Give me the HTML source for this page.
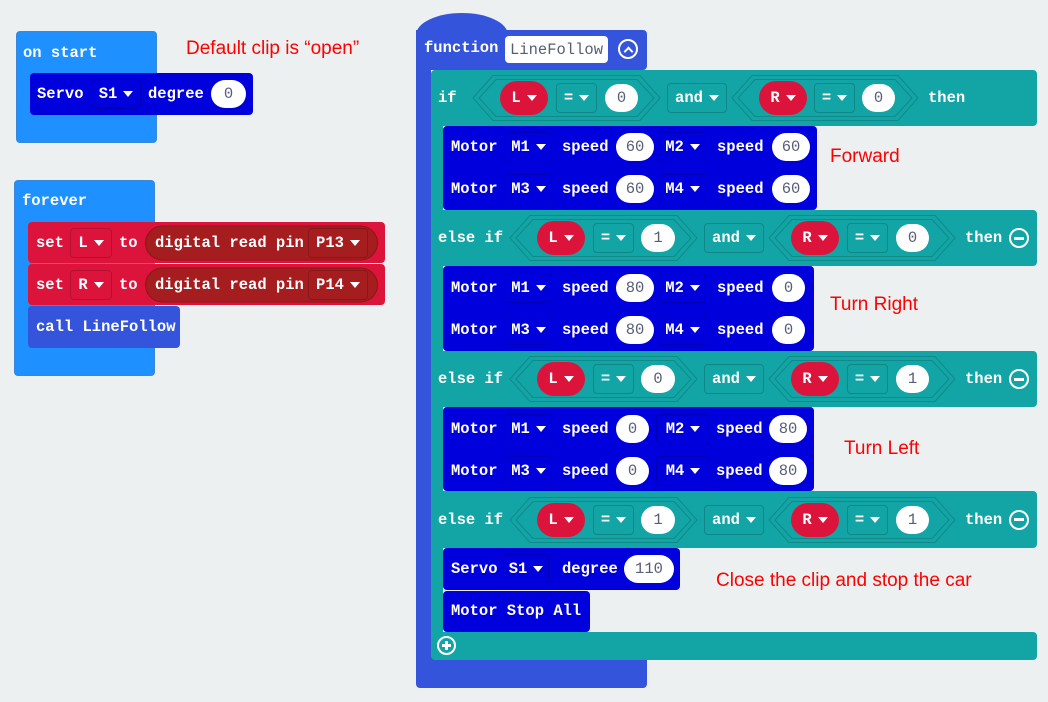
<!DOCTYPE html>
<html><head><meta charset="utf-8"><style>
*{box-sizing:border-box;margin:0;padding:0}
body{width:1048px;height:702px;background:#ecf0f1;position:relative;overflow:hidden;font-family:"Liberation Mono",monospace;font-weight:bold;font-size:15.5px;color:#fff}
.b{position:absolute}
.r{position:absolute;left:0;width:1048px}
.r>*{position:absolute;top:50%;transform:translateY(-50%);white-space:nowrap}
.dd{height:30px;border:1px solid rgba(0,0,0,.18);border-radius:4px;display:flex;align-items:center;justify-content:center;gap:6px}
.pill{height:28px;background:#fff;border-radius:14px;color:#575e75;display:flex;align-items:center;justify-content:center;font-weight:normal}
.oval{height:34px;background:#dc143c;border-radius:17px;display:flex;align-items:center;justify-content:center;gap:6px;width:48px}
.ar{display:inline-block;width:0;height:0;border-left:5px solid transparent;border-right:5px solid transparent;border-top:6px solid #fff}
.note{position:absolute;color:#f00;font-family:"Liberation Sans",sans-serif;font-weight:normal;font-size:19px}
.teal{background:#13a5a5}
.mb{background:#0000dd;border-radius:4px}
.circ{width:20px;height:20px;border:2px solid #fff;border-radius:50%;display:flex;align-items:center;justify-content:center}
.circ i{display:block;width:10px;height:3px;background:#fff}
</style></head><body>

<!-- on start -->
<div class="b" style="left:16px;top:31px;width:141px;height:112px;background:#1e90ff;border-radius:4px;border:1px solid #3a86d8"></div>
<div class="b" style="left:23px;top:44px">on start</div>
<div class="b mb" style="left:30px;top:73px;width:223px;height:42px"></div>
<div class="r" style="top:73px;height:42px">
 <span style="left:37px">Servo</span>
 <div class="dd" style="left:91px;width:50px">S1<span class="ar"></span></div>
 <span style="left:148px">degree</span>
 <div class="pill" style="left:211px;width:35px">0</div>
</div>
<div class="note" style="left:186px;top:38px">Default clip is “open”</div>

<!-- forever -->
<div class="b" style="left:14px;top:180px;width:141px;height:196px;background:#1e90ff;border-radius:4px;border:1px solid #3a86d8"></div>
<div class="b" style="left:22px;top:192px">forever</div>
<div class="b" style="left:28px;top:222px;width:357px;height:41px;background:#dc143c;border-radius:4px"></div>
<div class="b" style="left:28px;top:264px;width:357px;height:41px;background:#dc143c;border-radius:4px"></div>
<div class="r" style="top:222px;height:41px">
 <span style="left:36px">set</span>
 <div class="dd" style="left:70px;width:42px">L<span class="ar"></span></div>
 <span style="left:119px">to</span>
 <div style="left:145px;width:233px;height:35px;background:#a61d1f;border-radius:18px;border:1px solid #8d1515"></div>
 <span style="left:155px">digital read pin</span>
 <div class="dd" style="left:308px;width:60px">P13<span class="ar"></span></div>
</div>
<div class="r" style="top:264px;height:41px">
 <span style="left:36px">set</span>
 <div class="dd" style="left:70px;width:42px">R<span class="ar"></span></div>
 <span style="left:119px">to</span>
 <div style="left:145px;width:233px;height:35px;background:#a61d1f;border-radius:18px;border:1px solid #8d1515"></div>
 <span style="left:155px">digital read pin</span>
 <div class="dd" style="left:308px;width:60px">P14<span class="ar"></span></div>
</div>
<div class="b" style="left:28px;top:306px;width:152px;height:42px;background:#3455db;border-radius:4px"></div>
<div class="b" style="left:36px;top:318px">call LineFollow</div>

<!-- function -->
<div class="b" style="left:416px;top:13px;width:92px;height:30px;background:#3455db;border-radius:46px 46px 0 0 / 22px 22px 0 0"></div>
<div class="b" style="left:416px;top:30px;width:231px;height:40px;background:#3455db;border-radius:0 4px 4px 0"></div>
<div class="b" style="left:416px;top:60px;width:15px;height:610px;background:#3455db"></div>
<div class="b" style="left:416px;top:655px;width:231px;height:33px;background:#3455db;border-radius:0 0 4px 4px"></div>
<div class="b" style="left:424px;top:39px">function</div>
<div class="b" style="left:505px;top:36px;width:103px;height:27px;background:#fff;border-radius:4px;color:#575e75;font-weight:normal;display:flex;align-items:center;justify-content:center">LineFollow</div>
<div class="b circ" style="left:618px;top:39px"><span style="display:block;width:7px;height:7px;border-left:2px solid #fff;border-top:2px solid #fff;transform:translateY(2px) rotate(45deg)"></span></div>

<!-- teal if block -->
<div class="b teal" style="left:431px;top:70px;width:606px;height:56px;border-radius:4px"></div>
<div class="b teal" style="left:431px;top:120px;width:12px;height:520px"></div>
<div class="b teal" style="left:431px;top:210px;width:606px;height:56px;border-radius:0 4px 4px 0"></div>
<div class="b teal" style="left:431px;top:351px;width:606px;height:56px;border-radius:0 4px 4px 0"></div>
<div class="b teal" style="left:431px;top:491px;width:606px;height:57px;border-radius:0 4px 4px 0"></div>
<div class="b teal" style="left:431px;top:632px;width:606px;height:28px;border-radius:0 4px 4px 4px"></div>
<div class="b circ" style="left:437px;top:636px;width:19px;height:19px"><i style="width:9px"></i><i style="position:absolute;width:3px;height:9px"></i></div>

<!-- if row -->
<div class="r" style="top:70px;height:56px">
 <span style="left:438px">if</span>
 <svg style="left:472px" width="189" height="47"><polygon points="1,23.5 21,1 168,1 188,23.5 168,46 21,46" fill="none" stroke="#0e8a8a"/><polygon points="7,23.5 24,5 165,5 182,23.5 165,42 24,42" fill="none" stroke="#0e8a8a"/></svg>
 <div class="oval" style="left:500px">L<span class="ar"></span></div>
 <div class="dd" style="left:556px;width:41px">=<span class="ar"></span></div>
 <div class="pill" style="left:605px;width:33px">0</div>
 <div class="dd" style="left:667px;width:60px">and<span class="ar"></span></div>
 <svg style="left:731px" width="188" height="47"><polygon points="1,23.5 21,1 167,1 187,23.5 167,46 21,46" fill="none" stroke="#0e8a8a"/><polygon points="7,23.5 24,5 164,5 181,23.5 164,42 24,42" fill="none" stroke="#0e8a8a"/></svg>
 <div class="oval" style="left:759px">R<span class="ar"></span></div>
 <div class="dd" style="left:814px;width:41px">=<span class="ar"></span></div>
 <div class="pill" style="left:862px;width:33px">0</div>
 <span style="left:928px">then</span>
</div>

<!-- else if rows -->
<div class="r" style="top:210px;height:56px">
 <span style="left:438px">else if</span>
 <svg style="left:509px" width="189" height="47"><polygon points="1,23.5 21,1 168,1 188,23.5 168,46 21,46" fill="none" stroke="#0e8a8a"/><polygon points="7,23.5 24,5 165,5 182,23.5 165,42 24,42" fill="none" stroke="#0e8a8a"/></svg>
 <div class="oval" style="left:537px">L<span class="ar"></span></div>
 <div class="dd" style="left:593px;width:41px">=<span class="ar"></span></div>
 <div class="pill" style="left:641px;width:34px">1</div>
 <div class="dd" style="left:704px;width:60px">and<span class="ar"></span></div>
 <svg style="left:768px" width="188" height="47"><polygon points="1,23.5 21,1 167,1 187,23.5 167,46 21,46" fill="none" stroke="#0e8a8a"/><polygon points="7,23.5 24,5 164,5 181,23.5 164,42 24,42" fill="none" stroke="#0e8a8a"/></svg>
 <div class="oval" style="left:791px">R<span class="ar"></span></div>
 <div class="dd" style="left:847px;width:41px">=<span class="ar"></span></div>
 <div class="pill" style="left:896px;width:33px">0</div>
 <span style="left:965px">then</span>
 <div class="circ" style="left:1009px"><i></i></div>
</div>
<div class="r" style="top:351px;height:56px">
 <span style="left:438px">else if</span>
 <svg style="left:509px" width="189" height="47"><polygon points="1,23.5 21,1 168,1 188,23.5 168,46 21,46" fill="none" stroke="#0e8a8a"/><polygon points="7,23.5 24,5 165,5 182,23.5 165,42 24,42" fill="none" stroke="#0e8a8a"/></svg>
 <div class="oval" style="left:537px">L<span class="ar"></span></div>
 <div class="dd" style="left:593px;width:41px">=<span class="ar"></span></div>
 <div class="pill" style="left:641px;width:34px">0</div>
 <div class="dd" style="left:704px;width:60px">and<span class="ar"></span></div>
 <svg style="left:768px" width="188" height="47"><polygon points="1,23.5 21,1 167,1 187,23.5 167,46 21,46" fill="none" stroke="#0e8a8a"/><polygon points="7,23.5 24,5 164,5 181,23.5 164,42 24,42" fill="none" stroke="#0e8a8a"/></svg>
 <div class="oval" style="left:791px">R<span class="ar"></span></div>
 <div class="dd" style="left:847px;width:41px">=<span class="ar"></span></div>
 <div class="pill" style="left:896px;width:33px">1</div>
 <span style="left:965px">then</span>
 <div class="circ" style="left:1009px"><i></i></div>
</div>
<div class="r" style="top:491px;height:57px">
 <span style="left:438px">else if</span>
 <svg style="left:509px" width="189" height="47"><polygon points="1,23.5 21,1 168,1 188,23.5 168,46 21,46" fill="none" stroke="#0e8a8a"/><polygon points="7,23.5 24,5 165,5 182,23.5 165,42 24,42" fill="none" stroke="#0e8a8a"/></svg>
 <div class="oval" style="left:537px">L<span class="ar"></span></div>
 <div class="dd" style="left:593px;width:41px">=<span class="ar"></span></div>
 <div class="pill" style="left:641px;width:34px">1</div>
 <div class="dd" style="left:704px;width:60px">and<span class="ar"></span></div>
 <svg style="left:768px" width="188" height="47"><polygon points="1,23.5 21,1 167,1 187,23.5 167,46 21,46" fill="none" stroke="#0e8a8a"/><polygon points="7,23.5 24,5 164,5 181,23.5 164,42 24,42" fill="none" stroke="#0e8a8a"/></svg>
 <div class="oval" style="left:791px">R<span class="ar"></span></div>
 <div class="dd" style="left:847px;width:41px">=<span class="ar"></span></div>
 <div class="pill" style="left:896px;width:33px">1</div>
 <span style="left:965px">then</span>
 <div class="circ" style="left:1009px"><i></i></div>
</div>

<!-- motor blocks -->
<div class="b mb" style="left:443px;top:126px;width:374px;height:84px"></div>
<div class="b mb" style="left:443px;top:266px;width:371px;height:85px"></div>
<div class="b mb" style="left:443px;top:407px;width:371px;height:84px"></div>

<div class="r" style="top:126px;height:42px">
 <span style="left:451px">Motor</span><div class="dd" style="left:505px;width:47px">M1<span class="ar"></span></div>
 <span style="left:562px">speed</span><div class="pill" style="left:616px;width:38px">60</div>
 <div class="dd" style="left:659px;width:47px">M2<span class="ar"></span></div>
 <span style="left:717px">speed</span><div class="pill" style="left:772px;width:38px">60</div>
</div>
<div class="r" style="top:168px;height:42px">
 <span style="left:451px">Motor</span><div class="dd" style="left:505px;width:47px">M3<span class="ar"></span></div>
 <span style="left:562px">speed</span><div class="pill" style="left:616px;width:38px">60</div>
 <div class="dd" style="left:659px;width:47px">M4<span class="ar"></span></div>
 <span style="left:717px">speed</span><div class="pill" style="left:772px;width:38px">60</div>
</div>
<div class="r" style="top:267px;height:42px">
 <span style="left:451px">Motor</span><div class="dd" style="left:505px;width:47px">M1<span class="ar"></span></div>
 <span style="left:562px">speed</span><div class="pill" style="left:616px;width:38px">80</div>
 <div class="dd" style="left:659px;width:47px">M2<span class="ar"></span></div>
 <span style="left:717px">speed</span><div class="pill" style="left:772px;width:33px">0</div>
</div>
<div class="r" style="top:309px;height:42px">
 <span style="left:451px">Motor</span><div class="dd" style="left:505px;width:47px">M3<span class="ar"></span></div>
 <span style="left:562px">speed</span><div class="pill" style="left:616px;width:38px">80</div>
 <div class="dd" style="left:659px;width:47px">M4<span class="ar"></span></div>
 <span style="left:717px">speed</span><div class="pill" style="left:772px;width:33px">0</div>
</div>
<div class="r" style="top:408px;height:42px">
 <span style="left:451px">Motor</span><div class="dd" style="left:505px;width:47px">M1<span class="ar"></span></div>
 <span style="left:562px">speed</span><div class="pill" style="left:616px;width:33px">0</div>
 <div class="dd" style="left:656px;width:54px">M2<span class="ar"></span></div>
 <span style="left:716px">speed</span><div class="pill" style="left:769px;width:38px">80</div>
</div>
<div class="r" style="top:450px;height:42px">
 <span style="left:451px">Motor</span><div class="dd" style="left:505px;width:47px">M3<span class="ar"></span></div>
 <span style="left:562px">speed</span><div class="pill" style="left:616px;width:33px">0</div>
 <div class="dd" style="left:656px;width:54px">M4<span class="ar"></span></div>
 <span style="left:716px">speed</span><div class="pill" style="left:769px;width:38px">80</div>
</div>

<!-- servo + stop -->
<div class="b mb" style="left:443px;top:548px;width:237px;height:42px"></div>
<div class="r" style="top:548px;height:42px">
 <span style="left:451px">Servo</span>
 <div class="dd" style="left:503px;width:46px">S1<span class="ar"></span></div>
 <span style="left:562px">degree</span>
 <div class="pill" style="left:624px;width:50px">110</div>
</div>
<div class="b mb" style="left:443px;top:591px;width:147px;height:41px"></div>
<div class="b" style="left:451px;top:602px">Motor Stop All</div>

<div class="note" style="left:830px;top:146px">Forward</div>
<div class="note" style="left:830px;top:294px">Turn Right</div>
<div class="note" style="left:844px;top:438px">Turn Left</div>
<div class="note" style="left:716px;top:570px">Close the clip and stop the car</div>
</body></html>
